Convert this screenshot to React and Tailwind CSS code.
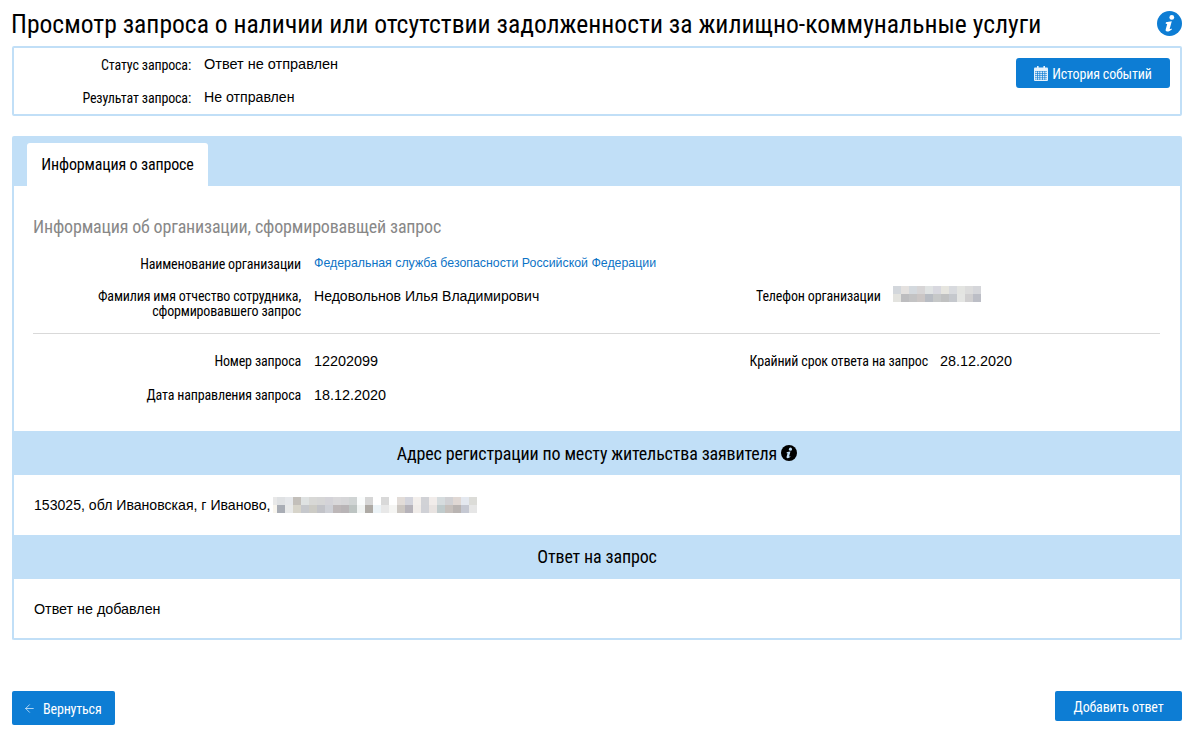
import React from "react";
import { ArrowLeft } from "lucide-react";

const phone = [
  ["#d3d7dc","#e4e1df","#d4d9de","#d7d5d6","#e0e3e3","#d8d8df","#e6e5df","#d8dade","#e3e4e1","#dcdcdc","#d5d6da"],
  ["#e3e3df","#bdbdbf","#c3c3c4","#cbc6c5","#b8bcc3","#c6c8c8","#c0c1c1","#c5c8cd","#e4e5e3","#d0cfd0","#bcbec6"],
];
const address = [
  ["#e8e8e8","#dfe1e3","#e5e7ea","#c3bfba","#dfe2e2","#d8d8d6","#d6d6d6","#d4d3d8","#d9d8da","#d6d6d8","#d0d4d4","#fafcfc","#d6d6d6","#ffffff","#d9d9d9","#ffffff","#e2dcd8","#d3d4dc","#f3efec","#d1d2d6","#f1ecea","#d6dcde","#d1d1d4","#e0d8d4","#e4e8ef","#dcdcd8"],
  ["#f8f5ee","#a9adb5","#e8e9e9","#d7d4ca","#c6c8cc","#cccbc5","#c2c3c8","#ced0d6","#bdb7b8","#b8b4b6","#bdc4c2","#f0f3f2","#aeaaa5","#ecf3f7","#e8e8e8","#f5f5f3","#ccc7c2","#b6b3ba","#f0ece9","#d0d1d6","#e8e3e1","#c0cbcc","#c6c0bc","#b9b4b2","#c5c8d2","#e6e6e6"],
];

const label = "pt-[2px] text-right font-['Roboto',sans-serif] text-[14px] tracking-[-0.16px] leading-[15px] font-[450] whitespace-nowrap font-stretch-condensed";

function Mosaic({ rows, firstHalf }) {
  return (
    <div className="flex flex-col">
      {rows.map((row, r) => (
        <div key={r} className="flex">
          {row.map((c, i) => (
            <div
              key={i}
              className={firstHalf && i === 0 ? "h-2 w-1" : "h-2 w-2"}
              style={{ backgroundColor: c }}
            />
          ))}
        </div>
      ))}
    </div>
  );
}

function InfoIcon({ className, dot }) {
  return (
    <svg viewBox="0 0 24 24" className={className}>
      <circle cx="12" cy="12" r="12" fill="currentColor" />
      <circle cx="14.2" cy="6.2" r="2.3" fill={dot} />
      <path
        d="M8.6 10.9c1.7-.6 3.6-1 5.6-1.1l-2 7.2c-.1.5.3.6 1.7-.2l.4.9c-1.5 1.2-3 2-4.4 2-1.3 0-1.9-.7-1.5-2.1l1.4-5.2-1.5-.2z"
        fill={dot}
      />
    </svg>
  );
}

function CalendarIcon() {
  return (
    <svg viewBox="0 0 14 15" className="mr-[4px] h-[15px] w-[14px] shrink-0">
      <rect x="0" y="1.5" width="14" height="13.5" rx="1" fill="#e6f2fc" />
      <rect x="3" y="0" width="1.6" height="3.4" fill="#e6f2fc" />
      <rect x="9.4" y="0" width="1.6" height="3.4" fill="#e6f2fc" />
      <rect x="1" y="5" width="12" height="9" fill="#0d7dd4" />
      {[5.5, 7.7, 9.9, 12.1].map((y) =>
        [1.2, 3.7, 6.2, 8.7, 11.2].map((x) => (
          <rect key={x + "-" + y} x={x} y={y} width="1.8" height="1.6" fill="#dcecfa" />
        ))
      )}
    </svg>
  );
}

export default function App() {
  return (
    <div className="min-h-[746px] bg-white pl-3 pr-[13px] font-['Liberation_Sans',sans-serif] text-sm text-black">
      {/* Title */}
      <div className="flex h-[46px] items-center justify-between">
        <h1 className="-ml-px pt-[3px] font-['Roboto',sans-serif] text-[25.6px] leading-none font-normal font-stretch-condensed">
          Просмотр запроса о наличии или отсутствии задолженности за жилищно-коммунальные услуги
        </h1>
        <InfoIcon className="h-[25px] w-[25px] text-[#0d7dd4]" dot="#ffffff" />
      </div>

      {/* Status */}
      <div className="flex h-[70px] justify-between rounded-[2px] border-2 border-[#c1dff7] pr-[10px]">
        <div className="flex flex-col pt-[7px]">
          <div className="flex h-[33px] items-start">
            <div className="w-[177px] pt-[1px] text-right font-['Roboto',sans-serif] text-[14px] leading-[18px] font-[450] tracking-[-0.16px] font-stretch-condensed">
              Статус запроса:
            </div>
            <div className="ml-[13px] text-[14.5px] leading-[18px]">Ответ не отправлен</div>
          </div>
          <div className="flex h-[22px] items-start">
            <div className="w-[177px] pt-[1px] text-right font-['Roboto',sans-serif] text-[14px] leading-[18px] font-[450] tracking-[-0.16px] font-stretch-condensed">
              Результат запроса:
            </div>
            <div className="ml-[13px] text-[14.15px] leading-[18px]">Не отправлен</div>
          </div>
        </div>
        <div className="pt-[10px]">
          <button className="flex h-[30px] w-[154px] items-center justify-center rounded-[3px] bg-[#0d7dd4] font-['Roboto',sans-serif] text-[14px] font-[450] tracking-[-0.16px] text-white font-stretch-condensed">
            <CalendarIcon />
            <span className="pt-px">История событий</span>
          </button>
        </div>
      </div>

      {/* Panel */}
      <div className="mt-5 h-[504px] overflow-hidden rounded-[2px] border-2 border-t-0 border-[#c1dff7]">
        <div className="flex h-[50px] items-end bg-[#c1dff7] pl-[13px]">
          <div className="flex h-[43px] w-[181px] items-center justify-center rounded-t-[3px] bg-white pt-[2px] font-['Roboto',sans-serif] text-[16px] font-[450] tracking-[-0.15px] font-stretch-condensed">
            Информация о запросе
          </div>
        </div>

        <div className="h-[245px] px-[19px] pt-[29px]">
          <div className="font-['Roboto',sans-serif] text-[18px] leading-6 font-[450] tracking-[-0.18px] text-[#888888] font-stretch-condensed">
            Информация об организации, сформировавщей запрос
          </div>

          <div className="mt-[12px] flex h-[24px] items-center">
            <div className={"w-[268px] " + label}>Наименование организации</div>
            <div className="ml-[13px] text-[12.35px] leading-4 text-[#0c73c6]">
              Федеральная служба безопасности Российской Федерации
            </div>
          </div>

          <div className="mt-[12px] flex h-[46px] items-start">
            <div className={"w-[268px] " + label}>
              Фамилия имя отчество сотрудника,
              <br />
              сформировавшего запрос
            </div>
            <div className="ml-[13px] w-[442px] text-[14.05px] leading-[18px]">Недовольнов Илья Владимирович</div>
            <div className={"w-[124px] " + label}>Телефон организации</div>
            <div className="-mt-px ml-[13px]">
              <Mosaic rows={phone} />
            </div>
          </div>

          <div className="mr-[1px] h-px bg-[#d9d9d9]" />

          <div className="mt-[18px] flex h-[34px] items-start">
            <div className={"w-[268px] " + label}>Номер запроса</div>
            <div className="ml-[13px] w-[435px] text-[14.4px] leading-[18px]">12202099</div>
            <div className={"w-[179px] " + label}>Крайний срок ответа на запрос</div>
            <div className="ml-[12px] text-[14.4px] leading-[18px]">28.12.2020</div>
          </div>

          <div className="flex items-start">
            <div className={"w-[268px] " + label}>Дата направления запроса</div>
            <div className="ml-[13px] text-[14.4px] leading-[18px]">18.12.2020</div>
          </div>
        </div>

        <div className="flex h-[44px] items-center justify-center bg-[#c1dff7] pt-[1px] font-['Roboto',sans-serif] text-[18px] font-[450] tracking-[-0.15px] font-stretch-condensed">
          Адрес регистрации по месту жительства заявителя
          <InfoIcon className="-mt-[2px] ml-[4px] h-4 w-4 text-black" dot="#c1dff7" />
        </div>
        <div className="flex h-[60px] items-center pb-[1px] pl-5">
          <span className="text-[14.1px] leading-[18px]">153025, обл Ивановская, г Иваново,</span>
          <div className="ml-[3px]">
            <Mosaic rows={address} firstHalf />
          </div>
        </div>

        <div className="flex h-[44px] items-center justify-center bg-[#c1dff7] font-['Roboto',sans-serif] text-[18px] font-[450] tracking-[-0.15px] font-stretch-condensed">
          Ответ на запрос
        </div>
        <div className="flex h-[59px] items-center pl-5 text-[14.3px] leading-[18px]">Ответ не добавлен</div>
      </div>

      {/* Footer */}
      <div className="mt-[51px] flex items-start justify-between">
        <button className="flex h-[34px] w-[103px] items-center rounded-[2px] bg-[#0d7dd4] pl-[11px] font-['Roboto',sans-serif] text-[14px] font-[450] tracking-[-0.16px] text-white font-stretch-condensed">
          <ArrowLeft className="mr-[7px] h-[13px] w-[13px] text-[#cfe6fa]" strokeWidth={1.5} />
          <span className="pt-[1px]">Вернуться</span>
        </button>
        <button className="flex h-[30px] w-[127px] items-center justify-center rounded-[2px] bg-[#0d7dd4] pt-px font-['Roboto',sans-serif] text-[14px] font-[450] tracking-[-0.16px] text-white font-stretch-condensed">
          Добавить ответ
        </button>
      </div>
    </div>
  );
}
